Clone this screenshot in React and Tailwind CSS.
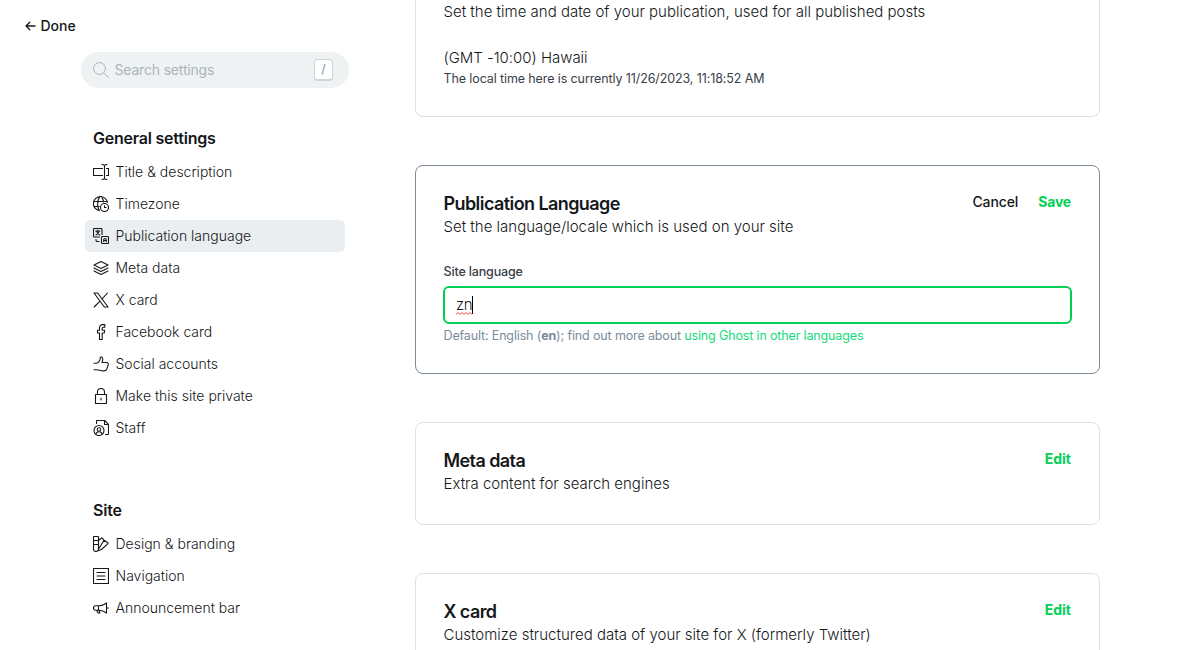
import React from 'react';

function Icon({ children }) {
  return (
    <svg
      className="h-4 w-4 shrink-0"
      viewBox="0 0 16 16"
      fill="none"
      stroke="currentColor"
      strokeWidth="1.1"
      strokeLinecap="round"
      strokeLinejoin="round"
    >
      {children}
    </svg>
  );
}

const icons = {
  title: (
    <Icon>
      <path d="M9.500 4.500H.500v7h9M13.500 4.500h2v7h-2M11.500 2v12M9 .5c1.500 0 2.500.5 2.500 1.500 0-1 1-1.500 2.500-1.500M9 15.500c1.500 0 2.500-.5 2.500-1.500 0 1 1 1.500 2.500 1.500" />
    </Icon>
  ),
  timezone: (
    <Icon>
      <path d="M6.500 14.700A7.100 7.100 0 1 1 14.500 6.500M.8 5.500h13.500M.8 10.500h5.400M6.200 14.300C4 11 4 4.500 6.800.6M8.400.6c1.300 1.600 2 3.400 2.200 5.400" />
      <circle cx="11.500" cy="11.500" r="4" />
      <path d="M11.500 9.700v1.800h1.600" />
    </Icon>
  ),
  language: (
    <Icon>
      <path d="M6.500 9H1.200a.7.7 0 0 1-.7-.7V1.200c0-.4.300-.7.700-.7h7.100c.4 0 .7.300.7.700V6.500" />
      <path d="M9.200 8.500h5.600c.4 0 .7.300.7.700v5.600c0 .4-.3.700-.7.700H9.200a.7.7 0 0 1-.7-.7V9.200c0-.4.300-.7.700-.7z" />
      <path d="M2.700 3h4.200M4.800 2.200V3M6.200 3C5.800 4.800 4.500 6.300 2.900 6.900M3.500 3.200C4.100 5 5.300 6.300 6.800 6.900M10.700 13.700v-1.900a1.300 1.300 0 0 1 2.600 0v1.900M10.700 12.500h2.600" />
      <path d="M3 11.500v.7c0 .7.500 1.300 1.200 1.300H6" />
    </Icon>
  ),
  meta: (
    <Icon>
      <path d="M8 1.500 15 5 8 8.500 1 5zM1 8l7 3.500L15 8M1 11l7 3.500 7-3.500" />
    </Icon>
  ),
  x: (
    <Icon>
      <path d="M1 1h3.700L15 15h-3.700zM14.500 1 8.900 7.200M7 9.100 1.200 15" />
    </Icon>
  ),
  facebook: (
    <Icon>
      <path d="M6.500 15.500V9h-2V6.200h2V4c0-2 1.200-3.400 3.300-3.400h2v2.700h-1.500c-.7 0-1.100.4-1.100 1.100v1.800h2.500L11.300 9H9.200v6.500z" />
    </Icon>
  ),
  thumb: (
    <Icon>
      <path d="M1 7.200h2.300c2 0 3.900-2.400 3.900-5 0-1.900 2.500-1.700 2.500.7 0 1.400-.2 2.400-.7 3.600h4.500c1.600 0 2 1.100 1.700 2.200l-1.200 4c-.4 1.500-1.300 2.200-2.700 2.200-4.500 0-4.800-1.200-8-1.200H1" />
    </Icon>
  ),
  lock: (
    <Icon>
      <path d="M2.500 6.500h11v9h-11zM4.500 6.500V4a3.500 3.500 0 0 1 7 0v2.500M8 10v2" />
    </Icon>
  ),
  staff: (
    <Icon>
      <path d="M3.500 3.500V1.200c0-.4.300-.7.700-.7h7.500l3.800 3.800v9.500c0 .4-.3.700-.7.700h-2.300M11.500.7v3.800h3.800" />
      <circle cx="6" cy="10.500" r="5" />
      <circle cx="6" cy="9.500" r="1.800" />
      <path d="M3 14c.5-3 5.500-3 6 0" />
    </Icon>
  ),
  design: (
    <Icon>
      <path d="M.5 1.200c0-.4.300-.7.700-.7h3.600c.4 0 .7.300.7.700v11.800a2.500 2.500 0 0 1-5 0zM.5 4.500h5M.5 8.500h5M5.500 4.500l3-2.500c.3-.2.600-.2.800.1l1.700 2.200-5.500 9M11 4.300l3.800 2.500c.3.200.4.500.1.800L8.500 13.500 4.500 15" />
    </Icon>
  ),
  nav: (
    <Icon>
      <path d="M.5.5h15v15H.5zM4 4.500h8M4 8h8M4 11.500h8" />
    </Icon>
  ),
  horn: (
    <Icon>
      <path d="M2.800 5.700h3.400c2.300 0 5-1 7.300-2.700v10c-2.300-1.700-5-2.700-7.300-2.700H2.800a2.300 2.300 0 0 1 0-4.600zM3.800 10.300l.7 2c.1.400.5.700.9.700h1.500L6 10.300M5.500 5.700v4.600M13.500 8h2" />
    </Icon>
  ),
};

const general = [
  ['title', 'Title & description'],
  ['timezone', 'Timezone'],
  ['language', 'Publication language'],
  ['meta', 'Meta data'],
  ['x', 'X card'],
  ['facebook', 'Facebook card'],
  ['thumb', 'Social accounts'],
  ['lock', 'Make this site private'],
  ['staff', 'Staff'],
];

const site = [
  ['design', 'Design & branding'],
  ['nav', 'Navigation'],
  ['horn', 'Announcement bar'],
];

function NavGroup({ title, items, active }) {
  return (
    <section>
      <h2 className="mb-1.5 pl-2 text-base leading-6 font-semibold tracking-[-0.22px]">{title}</h2>
      <ul>
        {items.map(([icon, label]) => (
          <li
            key={icon}
            className={
              'flex h-8 items-center gap-[6.5px] rounded-[5px] pl-2 text-[14px] leading-5 font-light text-[#15171a] ' +
              (icon === active ? 'bg-[#ebeef0]' : '')
            }
          >
            {icons[icon]}
            <span className="pb-px">{label}</span>
          </li>
        ))}
      </ul>
    </section>
  );
}

function Card({ title, description, actions, active, children }) {
  return (
    <section
      className={
        'shrink-0 rounded-lg border pt-[26px] pr-7 pl-[27.5px] ' +
        (active ? 'h-[209px] border-[#7c8b9a]' : 'h-[103px] border-[#dde1e5]')
      }
    >
      <div className="flex items-start justify-between">
        <div>
          <h3 className="text-[18px] leading-6 font-semibold tracking-[-0.58px]">{title}</h3>
          <p className="text-[15px] leading-[22px] font-light">{description}</p>
        </div>
        <div className="flex gap-5 text-[14px] leading-5 font-semibold">{actions}</div>
      </div>
      {children}
    </section>
  );
}

function Edit() {
  return <button className="font-bold text-[#00d154]">Edit</button>;
}

export default function App() {
  return (
    <div className="flex h-[650px] w-[1184px] overflow-hidden bg-white font-['Inter',sans-serif] text-[#15171a]">
      <aside className="w-[415px] shrink-0">
        <button className="mt-[15px] ml-[25px] flex h-5 items-center gap-[4.5px] text-[14px] font-medium">
          <svg className="mt-px h-[10px] w-[11px]" viewBox="0 0 11 10" fill="none" stroke="currentColor" strokeWidth="1.3" strokeLinecap="round" strokeLinejoin="round">
            <path d="M10 5H1M4.800 1.200 1 5l3.800 3.800" />
          </svg>
          Done
        </button>
        <div className="mt-[17px] ml-[81px] flex h-9 w-[268px] items-center rounded-full bg-[#eff2f3] pr-4 pl-3 text-[14px] leading-5 text-[#aab4be]">
          <svg className="mr-1.5 h-4 w-4" viewBox="0 0 16 16" fill="none" stroke="#abb4be" strokeLinecap="round">
            <circle cx="6.500" cy="6.500" r="6" />
            <path d="m11 11 4.500 4.500" />
          </svg>
          <span className="-ml-[0.5px] grow pb-px tracking-[-0.18px]">Search settings</span>
          <span className="flex h-[22px] w-[19px] items-center justify-center rounded-[4px] border border-b-2 border-[#ced4d9] bg-white pb-px text-[12px] text-[#7c8b9a]">/</span>
        </div>
        <div className="mt-[38px] ml-[85px] flex w-[260px] flex-col gap-[54px]">
          <NavGroup title="General settings" items={general} active="language" />
          <NavGroup title="Site" items={site} />
        </div>
      </aside>
      <main className="flex w-[685px] flex-col gap-12">
        <section className="h-[117px] shrink-0 rounded-b-lg border border-t-0 border-[#dde1e5] pr-7 pl-[27.5px]">
          <p className="mt-[1px] text-[15px] leading-[22px] font-light">Set the time and date of your publication, used for all published posts</p>
          <p className="mt-6 text-[15px] leading-[22px] font-light tracking-[-0.03px]">(GMT -10:00) Hawaii</p>
          <p className="text-[12.5px] leading-5 tracking-[-0.11px] text-[#394047]">The local time here is currently 11/26/2023, 11:18:52 AM</p>
        </section>
        <Card
          active
          title="Publication Language"
          description="Set the language/locale which is used on your site"
          actions={
            <>
              <button className="font-medium tracking-[-0.1px]">Cancel</button>
              <button className="font-bold tracking-[-0.2px] text-[#00d154]">Save</button>
            </>
          }
        >
          <p className="mt-6 text-[12.5px] leading-5 font-medium tracking-[-0.15px] text-[#394047]">Site language</p>
          <div className="mt-1 -ml-[0.5px] flex h-[38px] w-[629px] items-center rounded-[6px] border-2 border-[#00d154] pl-[11px] text-[15px] leading-5 font-light">
            <span className="relative tracking-[-0.4px]">
              zn
              <svg className="absolute top-[17px] left-0 h-[3px] w-4" viewBox="0 0 16 3" fill="none" stroke="#f23a4a" strokeWidth="1">
                <path d="M0 2.500 2 .5l2 2 2-2 2 2 2-2 2 2 2-2 2 2" />
              </svg>
            </span>
            <span className="h-[18px] w-px bg-black" />
          </div>
          <p className="mt-[2px] text-[12.5px] leading-5 tracking-[-0.145px] text-[#7c8b9a]">
            Default: English (<b className="font-bold">en</b>); find out more about{' '}
            <span className="text-[#13dc7a]">using Ghost in other languages</span>
          </p>
        </Card>
        <Card title="Meta data" description="Extra content for search engines" actions={<Edit />} />
        <Card title="X card" description="Customize structured data of your site for X (formerly Twitter)" actions={<Edit />} />
      </main>
    </div>
  );
}
